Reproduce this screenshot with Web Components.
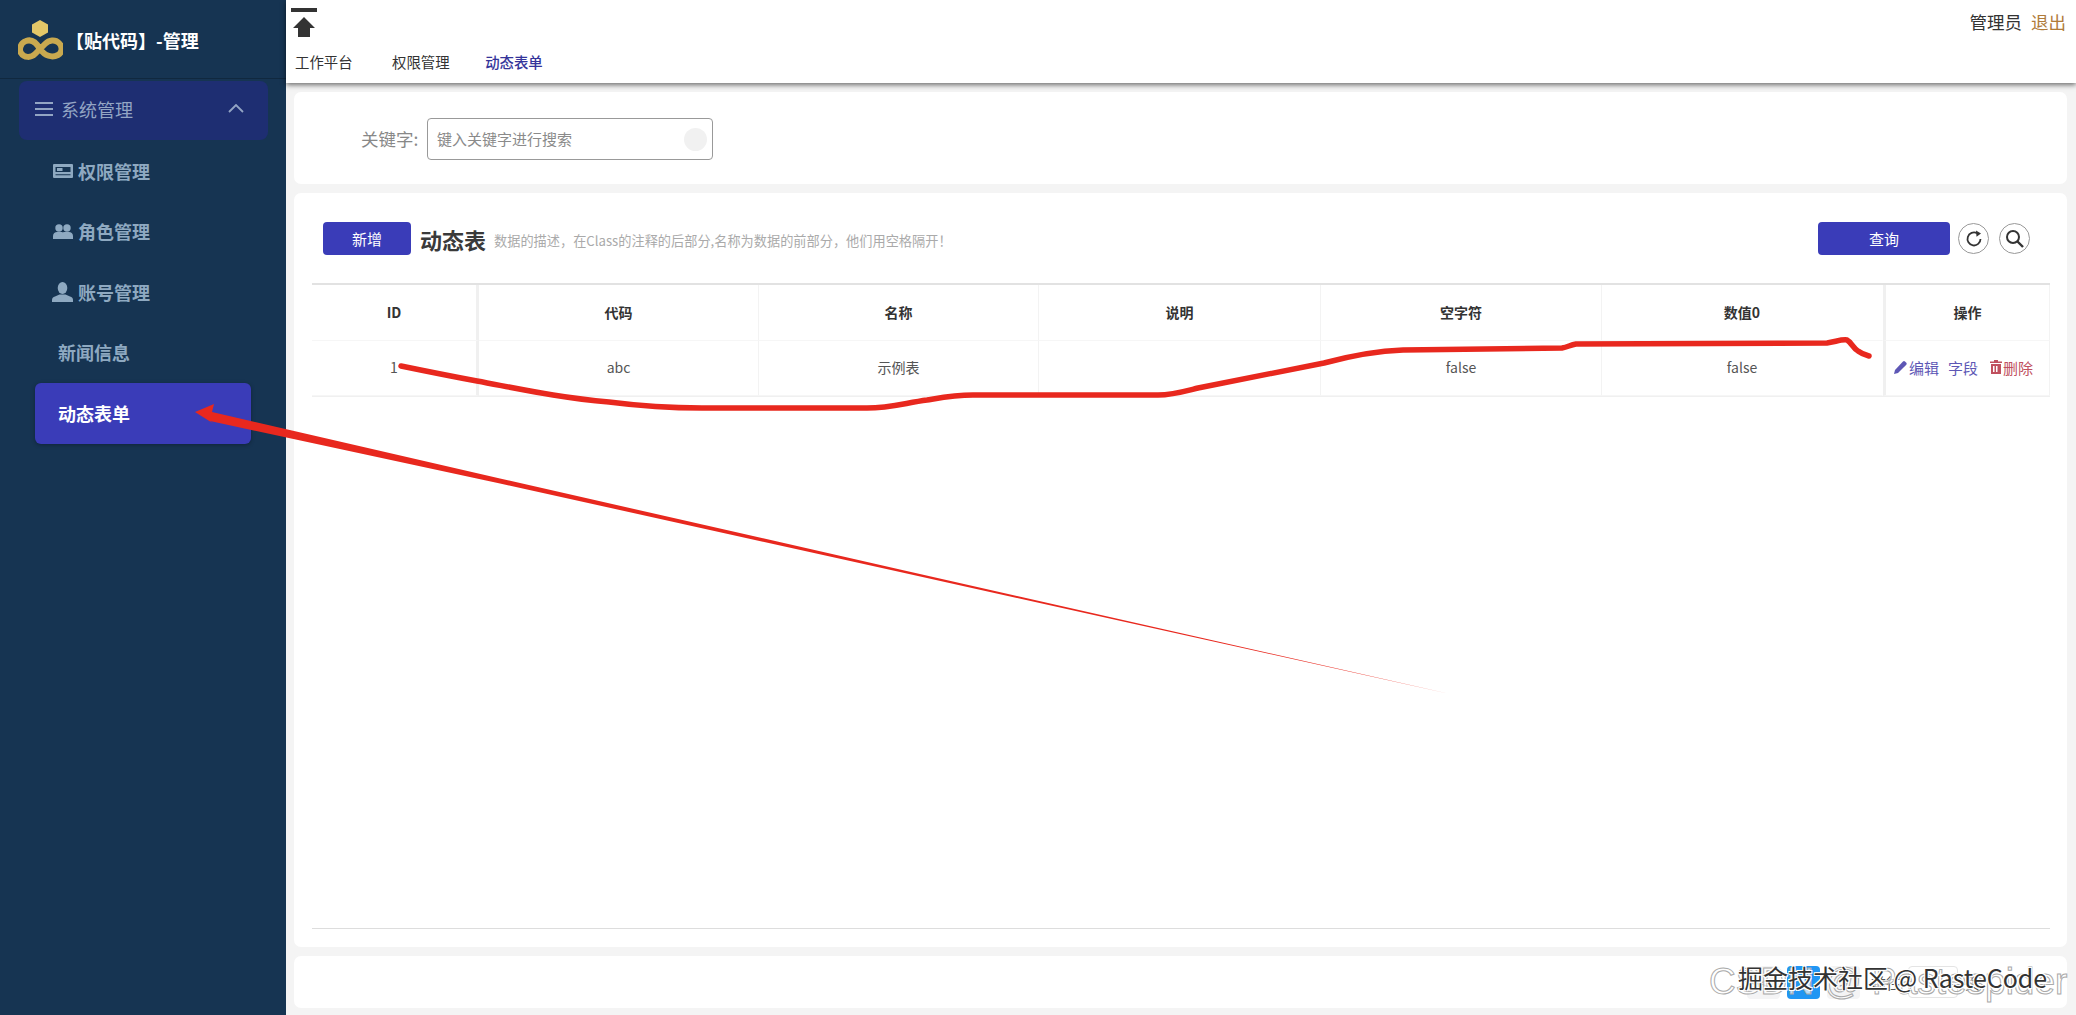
<!DOCTYPE html>
<html lang="zh">
<head>
<meta charset="utf-8">
<title>动态表单</title>
<style>
html, body { margin: 0; height: 100%; overflow: hidden; background: #f4f4f4; }
body { font-family: "Noto Sans CJK SC", "Liberation Sans", sans-serif; position: relative; }
</style>
</head>
<body>
<admin-shell>
    <side-bar slot="side">
        <side-item icon="card">权限管理</side-item>
        <side-item icon="users">角色管理</side-item>
        <side-item icon="user">账号管理</side-item>
        <side-item>新闻信息</side-item>
        <side-item active>动态表单</side-item>
    </side-bar>
    <top-bar slot="top"></top-bar>
    <search-card></search-card>
    <table-card></table-card>
    <pager-card></pager-card>
</admin-shell>
<mark-layer></mark-layer>

<script>
const ICONS = {
    card: '<svg width="20" height="14" viewBox="0 0 20 14"><path fill-rule="evenodd" fill="currentColor" d="M1 0h18a1 1 0 0 1 1 1v12a1 1 0 0 1-1 1H1a1 1 0 0 1-1-1V1a1 1 0 0 1 1-1zM2.500 3v5h15V3zM2.500 10.300v1h15v-1z"/><rect x="4" y="4" width="5.500" height="3" fill="currentColor"/></svg>',
    users: '<svg width="20" height="15" viewBox="0 0 20 15"><circle cx="6" cy="4" r="3.700" fill="currentColor"/><circle cx="14" cy="4" r="3.700" fill="currentColor"/><path fill="currentColor" d="M0 15v-3c0-2.500 2-4 4-4h4c1 0 2 .4 2 .4s1-.4 2-.4h4c2 0 4 1.500 4 4v3z"/></svg>',
    user: '<svg width="21" height="20" viewBox="0 0 21 20"><ellipse cx="10.500" cy="6" rx="4.800" ry="6" fill="currentColor"/><path fill="currentColor" d="M0 20v-2c0-2 1-3 3-3.600l4.500-1.900h6l4.500 1.900c2 .6 3 1.600 3 3.600v2z"/></svg>'
};

class AdminShell extends HTMLElement {
    constructor() {
        super();
        const shadow = this.attachShadow({ mode: 'open' });
        shadow.innerHTML = `
            <style>
                :host { display: flex; height: 1015px; width: 2076px; }
                .right { flex: 1; display: flex; flex-direction: column; min-width: 0; }
                .body {
                    flex: 1;
                    display: flex;
                    flex-direction: column;
                    gap: 9px;
                    padding: 9px 9px 7px 8px;
                    min-height: 0;
                }
            </style>
            <slot name="side"></slot>
            <div class="right">
                <slot name="top"></slot>
                <div class="body"><slot></slot></div>
            </div>
        `;
    }
}

class SideBar extends HTMLElement {
    constructor() {
        super();
        const shadow = this.attachShadow({ mode: 'open' });
        shadow.innerHTML = `
            <style>
                :host { display: block; width: 286px; flex: none; background: #163452; }
                .brand {
                    height: 79px;
                    box-sizing: border-box;
                    border-bottom: 1px solid #10283f;
                    display: flex;
                    align-items: center;
                    padding: 2px 0 0 18px;
                    gap: 3px;
                    color: #fff;
                    font-size: 18px;
                    font-weight: 700;
                }
                .group {
                    margin: 2px 18px 0 19px;
                    height: 59px;
                    box-sizing: border-box;
                    padding: 0 24px 4px 16px;
                    background: #1e2e72;
                    border-radius: 8px;
                    display: flex;
                    align-items: center;
                    gap: 8px;
                    color: #93a5c4;
                    font-size: 18px;
                }
                .group span { flex: 1; }
                .list {
                    display: flex;
                    flex-direction: column;
                    padding: 1px 35px 0;
                }
            </style>
            <div class="brand">
                <svg width="45" height="40" viewBox="0 0 45 40">
                    <polygon points="22,0 30,4.500 30,12.500 22,17 14,12.500 14,4.500" fill="#e3c768"/>
                    <path d="M22 29C18 22 13 19 8 21C2 23 1 30 3 33C6 38 13 38 17 34L27 24C31 20 37 19 41 23C45 27 44 33 40 35C34 38 27 36 22 29" fill="none" stroke="#c9a94f" stroke-width="6"/>
                </svg>
                <span>【贴代码】-管理</span>
            </div>
            <div class="group">
                <svg width="18" height="16" viewBox="0 0 18 16"><path d="M0 2h18M0 8h18M0 14h18" stroke="currentColor" stroke-width="2"/></svg>
                <span>系统管理</span>
                <svg width="16" height="9" viewBox="0 0 16 9"><path d="M1 8l7-7 7 7" fill="none" stroke="currentColor" stroke-width="1.800"/></svg>
            </div>
            <div class="list"><slot></slot></div>
        `;
    }
}

class SideItem extends HTMLElement {
    constructor() {
        super();
        const shadow = this.attachShadow({ mode: 'open' });
        const icon = ICONS[this.getAttribute('icon')] || '';
        shadow.innerHTML = `
            <style>
                :host {
                    display: flex;
                    align-items: center;
                    height: 60.500px;
                    box-sizing: border-box;
                    padding-left: ${icon ? 17 : 23}px;
                    padding-bottom: 1px;
                    gap: 5px;
                    color: #8ea9c1;
                    font-size: 18px;
                    font-weight: 700;
                    border-radius: 6px;
                }
                :host([active]) {
                    background: #3a3cb8;
                    color: #fff;
                    box-shadow: 0 1px 4px rgba(0,0,0,.3);
                }
                i { display: flex; width: 21px; justify-content: center; }
            </style>
            ${icon ? `<i>${icon}</i>` : ''}
            <slot></slot>
        `;
    }
}

class TopBar extends HTMLElement {
    constructor() {
        super();
        const shadow = this.attachShadow({ mode: 'open' });
        shadow.innerHTML = `
            <style>
                :host {
                    display: block;
                    height: 83px;
                    background: #fff;
                    box-shadow: 0 2px 5px rgba(0,0,0,.55);
                    position: relative;
                    z-index: 2;
                    color: #333;
                }
                .row {
                    height: 49px;
                    display: flex;
                    justify-content: space-between;
                    padding: 8px 10px 0 5px;
                    box-sizing: border-box;
                }
                .home { display: block; }
                .user { font-size: 17.500px; line-height: 28px; }
                .user a { color: #b07b3a; margin-left: 5px; }
                nav {
                    display: flex;
                    gap: 39.500px;
                    padding-left: 9px;
                    font-size: 14.400px;
                    line-height: 26px;
                }
                nav .on { color: #34349a; font-weight: 500; margin-left: -4px; }
            </style>
            <div class="row">
                <svg class="home" width="27" height="29" viewBox="0 0 27 29">
                    <rect x="0" y="0" width="26" height="4" fill="#333"/>
                    <path d="M13 9l11 11h-5v9H7v-9H2z" fill="#333"/>
                </svg>
                <div class="user">管理员 <a>退出</a></div>
            </div>
            <nav><span>工作平台</span><span>权限管理</span><span class="on">动态表单</span></nav>
        `;
    }
}

class SearchCard extends HTMLElement {
    constructor() {
        super();
        const shadow = this.attachShadow({ mode: 'open' });
        shadow.innerHTML = `
            <style>
                :host {
                    display: flex;
                    align-items: center;
                    height: 92px;
                    flex: none;
                    background: #fff;
                    border-radius: 7px;
                    padding: 2px 0 0 67px;
                    box-sizing: border-box;
                    gap: 8.500px;
                }
                label { color: #888; font-size: 17.500px; margin-top: -2px; }
                .box {
                    width: 286px;
                    height: 42px;
                    box-sizing: border-box;
                    border: 1px solid #999;
                    border-radius: 4px;
                    display: flex;
                    align-items: center;
                    justify-content: space-between;
                    padding: 0 5px 0 9px;
                    color: #8a8a8a;
                    font-size: 15px;
                }
                .box span { margin-top: -2px; }
                .box i { width: 23px; height: 23px; border-radius: 50%; background: #f1f1f1; }
            </style>
            <label>关键字:</label>
            <div class="box"><span>键入关键字进行搜索</span><i></i></div>
        `;
    }
}

class TableCard extends HTMLElement {
    constructor() {
        super();
        const shadow = this.attachShadow({ mode: 'open' });
        const heads = ['代码', '名称', '说明', '空字符', '数值0'];
        const cells = ['abc', '示例表', '', 'false', 'false'];
        shadow.innerHTML = `
            <style>
                :host {
                    display: flex;
                    flex-direction: column;
                    flex: 1;
                    min-height: 0;
                    background: #fff;
                    border-radius: 7px;
                    padding: 29px 17px 18px 18px;
                    box-sizing: border-box;
                    color: #333;
                }
                .tools {
                    display: flex;
                    align-items: center;
                    height: 33px;
                    margin-bottom: 28px;
                    padding: 0 20px 0 11px;
                }
                button {
                    border: 0;
                    background: #3a3cb8;
                    color: #fff;
                    font: inherit;
                    font-size: 15px;
                    height: 33px;
                    border-radius: 4px;
                    padding: 0;
                }
                .add { width: 88px; }
                .query { width: 132px; margin-right: 8px; }
                h2 { margin: 0 0 0 9px; font-size: 22px; font-weight: 700; color: #3a3a3a; }
                .desc { margin-left: 8px; font-size: 13.200px; color: #aaa; flex: 1; padding-top: 3px; }
                .round {
                    width: 31px;
                    height: 31px;
                    box-sizing: border-box;
                    border: 1px solid #999;
                    border-radius: 50%;
                    display: flex;
                    align-items: center;
                    justify-content: center;
                    margin-left: 9px;
                }
                .round + .round { margin-left: 10px; }
                .query + .round { margin-left: 0; }
                .wrap { flex: 1; border-bottom: 1px solid #ddd; }
                .grid {
                    display: grid;
                    grid-template-columns: 167px 280px 280px 282px 281px 281px 167px;
                    grid-template-rows: 56px 55px;
                    border-top: 2px solid #e2e2e2;
                    border-bottom: 1px solid #f0f0f0;
                    font-size: 14px;
                }
                .grid > div {
                    display: flex;
                    align-items: center;
                    justify-content: center;
                    box-sizing: border-box;
                    padding-bottom: 2px;
                    border-right: 1px solid #f3f3f3;
                    border-bottom: 1px solid #f6f6f6;
                }
                .grid > .th { font-weight: 700; color: #333; }
                .grid > .td { color: #555; }
                .grid > .fix-l { border-right: 3px solid #f0f0f0; }
                .grid > .fix-r { border-left: 3px solid #f0f0f0; border-right: 1px solid #f3f3f3; }
                .grid > .lift { border-right-color: transparent; }
                .grid > .ops { justify-content: flex-start; padding-left: 8px; gap: 9px; font-size: 15px; }
                .ops a { display: inline-flex; align-items: center; gap: 1px; color: #5d57b5; white-space: nowrap; }
                .ops a.del { color: #c0505e; margin-left: 3px; }
            </style>
            <div class="tools">
                <button class="add">新增</button>
                <h2>动态表</h2>
                <span class="desc">数据的描述，在Class的注释的后部分,名称为数据的前部分，他们用空格隔开！</span>
                <button class="query">查询</button>
                <div class="round">
                    <svg width="18" height="18" viewBox="0 0 18 18"><path d="M15.500 9A6.500 6.500 0 1 1 12 3.200" fill="none" stroke="#333" stroke-width="1.800"/><path d="M11 .5l5 3-4.500 3.200z" fill="#333"/></svg>
                </div>
                <div class="round">
                    <svg width="19" height="19" viewBox="0 0 19 19"><circle cx="8" cy="8" r="6" fill="none" stroke="#333" stroke-width="2"/><path d="M12.500 12.500L18 18" stroke="#333" stroke-width="2.400"/></svg>
                </div>
            </div>
            <div class="wrap">
                <div class="grid">
                    <div class="th fix-l">ID</div>
                    ${heads.map((h, i) => `<div class="th${i === 4 ? ' lift' : ''}">${h}</div>`).join('')}
                    <div class="th fix-r">操作</div>
                    <div class="td fix-l">1</div>
                    ${cells.map((c, i) => `<div class="td${i === 4 ? ' lift' : ''}">${c}</div>`).join('')}
                    <div class="td fix-r ops">
                        <a><svg width="14" height="14" viewBox="0 0 14 14"><path d="M0 14l1-4 8-8.500a1.500 1.500 0 0 1 2 0l1.300 1.300a1.500 1.500 0 0 1 0 2L4 13z" fill="currentColor"/></svg>编辑</a>
                        <a>字段</a>
                        <a class="del"><svg width="12" height="14" viewBox="0 0 12 14"><path d="M4 0h4v1.500h4V3H0V1.500h4zM1 4h10v10H1zm2 2v6h1.500V6zm3 0v6h1.500V6z" fill="currentColor"/></svg>删除</a>
                    </div>
                </div>
            </div>
        `;
    }
}

class PagerCard extends HTMLElement {
    constructor() {
        super();
        const shadow = this.attachShadow({ mode: 'open' });
        shadow.innerHTML = `
            <style>
                :host {
                    display: flex;
                    align-items: center;
                    justify-content: flex-end;
                    height: 52px;
                    flex: none;
                    background: #fff;
                    border-radius: 7px;
                    padding-right: 87px;
                    box-sizing: border-box;
                    gap: 7px;
                    font-size: 15px;
                    color: #555;
                }
                .b {
                    width: 33px;
                    height: 33px;
                    box-sizing: border-box;
                    border-radius: 4px;
                    background: #f4f4f5;
                    display: flex;
                    align-items: center;
                    justify-content: center;
                    color: #999;
                }
                .b.on { background: #2196f3; color: #fff; }
                .go { margin-left: 4px; }
                .in {
                    width: 50px;
                    height: 32px;
                    box-sizing: border-box;
                    border: 1px solid #e4e4e4;
                    border-radius: 4px;
                }
            </style>
            <span class="b">&lt;</span>
            <span class="b on">1</span>
            <span class="b">&gt;</span>
            <span class="go">前往</span>
            <span class="in"></span>
            <span>页</span>
        `;
    }
}

class MarkLayer extends HTMLElement {
    constructor() {
        super();
        const shadow = this.attachShadow({ mode: 'open' });
        // hand drawn annotations and the two watermarks lying over the page
        shadow.innerHTML = `
            <style>
                :host { position: absolute; inset: 0; display: block; pointer-events: none; z-index: 5; overflow: hidden; }
                svg { position: absolute; left: 0; top: 0; }
                .wm { position: absolute; white-space: nowrap; }
                .csdn {
                    left: 1709px;
                    top: 961px;
                    font-family: "Liberation Sans", sans-serif;
                    font-size: 37px;
                    color: rgba(255,255,255,.7);
                    -webkit-text-stroke: 1px #aaa;
                }
                .juejin {
                    left: 1738px;
                    top: 959px;
                    font-size: 25px;
                    color: #333;
                    text-shadow: 1px 1px 0 #fff, -1px -1px 0 #fff, 1px -1px 0 #fff, -1px 1px 0 #fff;
                }
            </style>
            <svg width="2076" height="1015" viewBox="0 0 2076 1015">
                <path fill="none" stroke="#e8281e" stroke-width="5.500" stroke-linecap="round" stroke-linejoin="round"
                    d="M401 366C430 372 450 376 477 381C520 389 560 398 609 402C640 406 670 408 702 408L867 408C890 408 905 403 927 400C945 397 955 395 973 395L1158 395C1172 395 1182 392 1198 388L1324 363C1350 356 1375 351 1403 350L1562 348C1568 347 1570 345 1576 344L1827 343C1835 342 1842 339 1847 340C1851 342 1853 348 1858 351C1862 354 1865 355 1869 356"/>
                <polygon fill="#e8281e" points="195,412 214,404 212,412 500,478.500 900,569.500 1450,694 900,572 500,483.500 210,421 214,424"/>
            </svg>
            <span class="wm csdn">CSDN @ Pastespider</span>
            <span class="wm juejin">掘金技术社区 @ RasteCode</span>
        `;
    }
}

customElements.define('admin-shell', AdminShell);
customElements.define('side-bar', SideBar);
customElements.define('side-item', SideItem);
customElements.define('top-bar', TopBar);
customElements.define('search-card', SearchCard);
customElements.define('table-card', TableCard);
customElements.define('pager-card', PagerCard);
customElements.define('mark-layer', MarkLayer);
</script>
</body>
</html>
